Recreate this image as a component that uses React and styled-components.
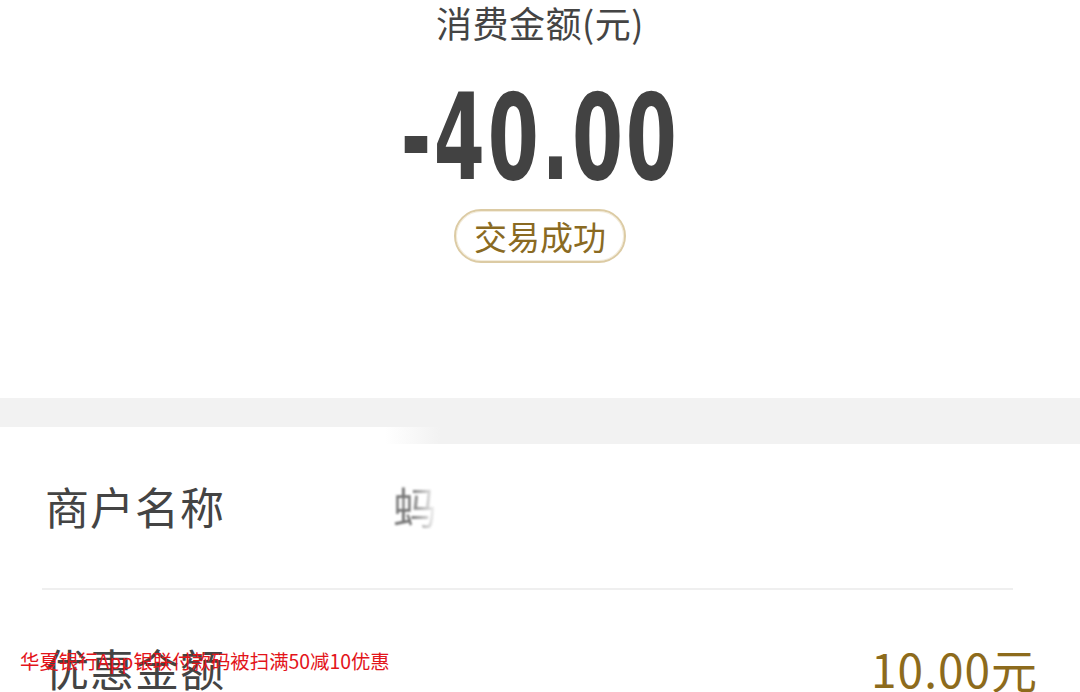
import React from 'react'
import styled, { createGlobalStyle } from 'styled-components'

const GlobalStyle = createGlobalStyle`
  html, body {
    margin: 0;
    padding: 0;
    background: #fff;
  }
  body {
    font-family: "Noto Sans CJK SC", "Noto Sans", sans-serif;
    color: #444;
    overflow: hidden;
  }
`

const Page = styled.div`
  position: relative;
  width: 1080px;
  height: 692px;
  overflow: hidden;
  display: flex;
  flex-direction: column;

  & > * {
    flex: none;
  }
`

const Summary = styled.section`
  display: flex;
  flex-direction: column;
  align-items: center;
  height: 398px;
`

const Caption = styled.div`
  font-size: 36px;
  line-height: 44px;
  color: #444;
  letter-spacing: 0.5px;
`

const Amount = styled.div`
  margin-top: 30px;
  font-family: "DejaVu Sans Condensed", "DejaVu Sans", sans-serif;
  font-weight: bold;
  font-size: 120px;
  line-height: 128px;
  color: #424242;
  transform: scaleX(0.68);
  letter-spacing: 4px;
`

const StatusPill = styled.div`
  margin-top: 7px;
  box-sizing: border-box;
  width: 172px;
  height: 54px;
  border: 2px solid #dccba4;
  border-radius: 27px;
  display: flex;
  align-items: center;
  justify-content: center;
  font-size: 33px;
  color: #8a6a22;
  box-shadow: inset 0 0 0 1px #f3ecdc;
`

const Band = styled.div`
  display: flex;
  flex-direction: column;
`

const BandTop = styled.div`
  height: 29px;
  background: #f2f2f2;
`

const BandTail = styled.div`
  height: 17px;
  background: linear-gradient(to right, #fff 0, #fff 385px, #f2f2f2 440px, #f2f2f2 100%);
`

const Row = styled.div`
  display: flex;
  align-items: center;
  padding: ${(p) => p.$top}px 42px ${(p) => p.$bottom}px 45px;
`

const Label = styled.div`
  width: 348px;
  flex: none;
  font-size: 44px;
  line-height: 64px;
  color: #444;
  letter-spacing: 1px;
`

const Value = styled.div`
  flex: 1;
  text-align: ${(p) => (p.$right ? 'right' : 'left')};
  font-size: ${(p) => (p.$gold ? 46 : 44)}px;
  line-height: 64px;
  color: ${(p) => (p.$gold ? '#8d6b1c' : '#555')};
  letter-spacing: ${(p) => (p.$gold ? 1 : 0)}px;
`

const Blurred = styled.span`
  display: inline-block;
  filter: blur(0.8px);
  opacity: 0.8;
  -webkit-mask-image: linear-gradient(to right, #000 40%, transparent 100%);
  mask-image: linear-gradient(to right, #000 40%, transparent 100%);
`

const Divider = styled.div`
  height: 2px;
  background: #efefef;
  margin: 0 67px 0 42px;
`

const Promo = styled.div`
  position: absolute;
  left: 20px;
  top: 648px;
  font-size: 19.4px;
  line-height: 26px;
  color: #e3141a;
  white-space: nowrap;
`

export default function App() {
  return (
    <>
      <GlobalStyle />
      <Page>
        <Summary>
          <Caption>消费金额(元)</Caption>
          <Amount>-40.00</Amount>
          <StatusPill>交易成功</StatusPill>
        </Summary>
        <Band>
          <BandTop />
          <BandTail />
        </Band>
        <Row $top={30} $bottom={50}>
          <Label>商户名称</Label>
          <Value>
            <Blurred>蚂</Blurred>
          </Value>
        </Row>
        <Divider />
        <Row $top={46} $bottom={40}>
          <Label>优惠金额</Label>
          <Value $right $gold>10.00元</Value>
        </Row>
        <Promo>华夏银行App银联付款码被扫满50减10优惠</Promo>
      </Page>
    </>
  )
}
